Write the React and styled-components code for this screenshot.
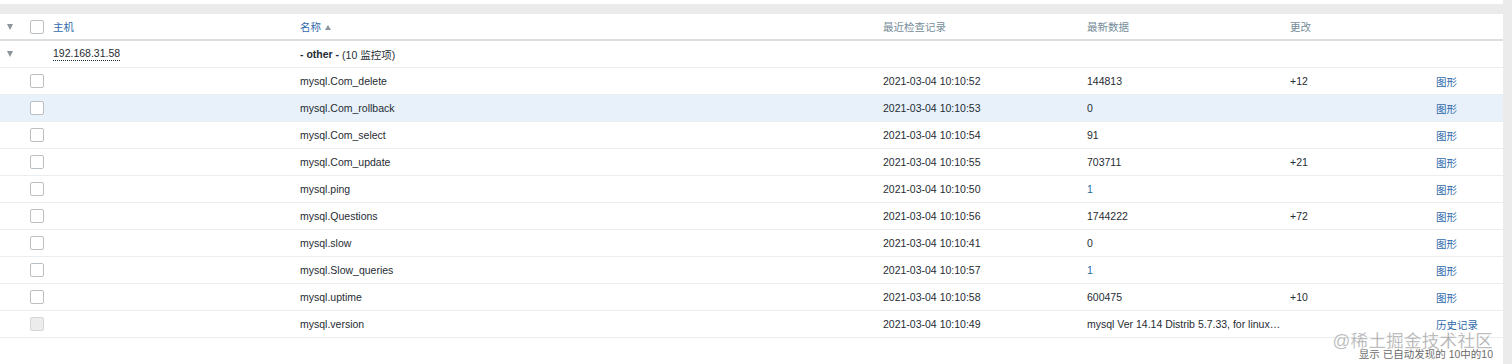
import React from "react";
import styled, { createGlobalStyle } from "styled-components";

const items = [
  { name: "mysql.Com_delete", clock: "2021-03-04 10:10:52", value: "144813", change: "+12", action: "图形" },
  { name: "mysql.Com_rollback", clock: "2021-03-04 10:10:53", value: "0", change: "", action: "图形", hover: true },
  { name: "mysql.Com_select", clock: "2021-03-04 10:10:54", value: "91", change: "", action: "图形" },
  { name: "mysql.Com_update", clock: "2021-03-04 10:10:55", value: "703711", change: "+21", action: "图形" },
  { name: "mysql.ping", clock: "2021-03-04 10:10:50", value: "1", mapped: true, change: "", action: "图形" },
  { name: "mysql.Questions", clock: "2021-03-04 10:10:56", value: "1744222", change: "+72", action: "图形" },
  { name: "mysql.slow", clock: "2021-03-04 10:10:41", value: "0", change: "", action: "图形" },
  { name: "mysql.Slow_queries", clock: "2021-03-04 10:10:57", value: "1", mapped: true, change: "", action: "图形" },
  { name: "mysql.uptime", clock: "2021-03-04 10:10:58", value: "600475", change: "+10", action: "图形" },
  {
    name: "mysql.version",
    clock: "2021-03-04 10:10:49",
    value: "mysql Ver 14.14 Distrib 5.7.33, for linux…",
    change: "",
    action: "历史记录",
    disabled: true,
  },
];

const GlobalStyle = createGlobalStyle`
  html, body {
    margin: 0;
    padding: 0;
    background: #ebebeb;
  }
  body {
    font-family: "Liberation Sans", Arial, "Noto Sans CJK SC", sans-serif;
    font-size: 10.5px;
    color: #1f2c33;
  }
`;

const App = () => {
  return (
    <Page>
      <GlobalStyle />
      <FilterEdge />
      <Panel>
        <Table>
          <HeadRow>
            <ToggleCell>
              <Caret />
            </ToggleCell>
            <Cell>
              <Checkbox />
            </Cell>
            <HeadCell $link>主机</HeadCell>
            <HeadCell $link>
              名称
              <SortArrow />
            </HeadCell>
            <HeadCell>最近检查记录</HeadCell>
            <HeadCell>最新数据</HeadCell>
            <HeadCell>更改</HeadCell>
            <HeadCell />
          </HeadRow>

          <Row>
            <ToggleCell>
              <Caret />
            </ToggleCell>
            <Cell />
            <Cell>
              <HostName>192.168.31.58</HostName>
            </Cell>
            <GroupCell>
              <strong>- other -</strong> (10 监控项)
            </GroupCell>
          </Row>

          {items.map((item) => (
            <Row key={item.name} $hover={item.hover}>
              <ToggleCell />
              <Cell>
                <Checkbox $disabled={item.disabled} />
              </Cell>
              <Cell />
              <Cell>{item.name}</Cell>
              <Cell>{item.clock}</Cell>
              <Cell>
                <Value $mapped={item.mapped}>{item.value}</Value>
              </Cell>
              <Cell>{item.change}</Cell>
              <Cell>
                <ActionLink>{item.action}</ActionLink>
              </Cell>
            </Row>
          ))}
        </Table>
        <Footer>
          <Stats>显示 已自动发现的 10中的10</Stats>
          <Watermark>@稀土掘金技术社区</Watermark>
        </Footer>
      </Panel>
    </Page>
  );
};

const Page = styled.div`
  width: 1512px;
  height: 364px;
  overflow: hidden;
  background: #ebebeb;
`;
const FilterEdge = styled.div`
  width: 1503px;
  height: 4px;
  background: #ffffff;
  margin-bottom: 10px;
`;
const Panel = styled.div`
  width: 1503px;
  background: #ffffff;
  height: 350px;
`;
const Table = styled.div`
  display: flex;
  flex-direction: column;
`;
const columns = "30px 23px 247px 583px 204px 203px 146px 67px";
const HeadRow = styled.div`
  display: grid;
  grid-template-columns: ${columns};
  align-items: center;
  height: 25px;
  border-bottom: 2px solid #dcdfe1;
`;
const Row = styled.div`
  display: grid;
  grid-template-columns: ${columns};
  align-items: center;
  height: 26px;
  border-bottom: 1px solid #ebeef0;
  background: ${(p) => (p.$hover ? "#e8f1fa" : "#ffffff")};
`;
const Cell = styled.div`
  display: flex;
  align-items: center;
  white-space: nowrap;
  overflow: hidden;
`;
const ToggleCell = styled(Cell)`
  padding-left: 7px;
`;
const HeadCell = styled(Cell)`
  color: ${(p) => (p.$link ? "#2f6aab" : "#768d99")};
`;
const GroupCell = styled(Cell)`
  grid-column: 4 / span 5;
  strong {
    font-weight: bold;
    margin-right: 3px;
  }
`;
const Caret = styled.span`
  width: 0;
  height: 0;
  border-left: 3px solid transparent;
  border-right: 3px solid transparent;
  border-top: 6px solid #8c959b;
`;
const SortArrow = styled.span`
  width: 0;
  height: 0;
  margin-left: 4px;
  margin-top: 1px;
  border-left: 3px solid transparent;
  border-right: 3px solid transparent;
  border-bottom: 5px solid #8c959b;
`;
const Checkbox = styled.span`
  box-sizing: border-box;
  width: 14px;
  height: 14px;
  border: 1px solid ${(p) => (p.$disabled ? "#d6d6d6" : "#b9bfc3")};
  border-radius: 2px;
  background: ${(p) => (p.$disabled ? "#ececec" : "#ffffff")};
`;
const HostName = styled.span`
  border-bottom: 1px dotted #1f2c33;
  line-height: 13px;
`;
const Value = styled.span`
  color: ${(p) => (p.$mapped ? "#1f6aa0" : "#1f2c33")};
`;
const ActionLink = styled.span`
  color: #2f6aab;
`;
const Footer = styled.div`
  position: relative;
  display: flex;
  justify-content: flex-end;
  align-items: center;
  height: 27px;
  padding-right: 10px;
`;
const Stats = styled.span`
  color: #6b6b6b;
  margin-top: 3px;
`;
const Watermark = styled.span`
  position: absolute;
  right: 10px;
  top: -11px;
  font-size: 17.5px;
  letter-spacing: 0.3px;
  color: rgba(150, 150, 150, 0.75);
  -webkit-text-stroke: 0.3px rgba(255, 255, 255, 0.6);
`;

export default App;
